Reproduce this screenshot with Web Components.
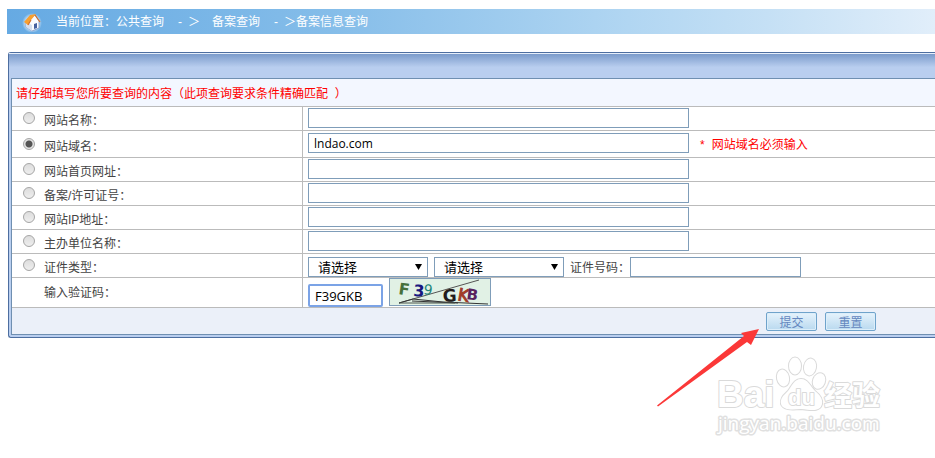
<!DOCTYPE html>
<html lang="zh-CN">
<head>
<meta charset="utf-8">
<title>备案信息查询</title>
<style>
  body {
    background: #fff;
    color: #444;
    font-family: "Liberation Sans", "Noto Sans CJK SC", sans-serif;
    font-size: 12px;
    margin: 9px 0 0 7px;
    overflow-x: hidden;
  }
</style>
</head>
<body>
<location-bar>
  <span>当前位置：公共查询</span>
  <span slot="second">备案查询</span>
  <span slot="third">备案信息查询</span>
</location-bar>
<query-panel></query-panel>
<site-watermark></site-watermark>

<script>
class LocationBar extends HTMLElement {

    constructor() {
        super();
        this.shadow = this.attachShadow({ mode: 'open' });
    }

    connectedCallback() {
        this.render()
    }

    render() {

        this.shadow.innerHTML =
        /*html*/`
      <style>
        :host{
        align-items: center;
        background: linear-gradient(90deg, #66aae3, #85bde9 35%, #b1d6f2 67%, #c5e0f5 82%, #e1eefa);
        color: #fff;
        display: flex;
        height: 25px;
        line-height: 16px;
        padding-left: 15px;
        white-space: nowrap;
        }

        svg{
        height: 20px;
        margin-right: 14px;
        width: 20px;
        }

        .sep{
        display: flex;
        gap: 4px;
        padding: 0 12px 0 14px;
        }

        .dash{
        width: 6px;
        }

        .last{
        padding-right: 0;
        }
      </style>
      <svg viewBox="0 0 20 20" aria-hidden="true">
        <defs><radialGradient id="g"><stop offset=".65" stop-color="#fff" stop-opacity=".6"/><stop offset="1" stop-color="#fff" stop-opacity="0"/></radialGradient></defs>
        <circle cx="10" cy="11" r="10" fill="url(#g)"/>
        <path d="M4 9v6l6 4 7-3V9l-4-6z" fill="#fafbff" stroke="#8296c4" stroke-width=".8"/>
        <path d="M4 10l6 3v6l-6-4z" fill="#d5dff0"/>
        <path d="M2 10L8 3l6-1-5 6-3 5z" fill="#f8a030"/>
        <path d="M13 3l5 7M9 8l-3 5" fill="none" stroke="#d8702a" stroke-width="1.200"/>
        <path d="M12 12l3-1v5l-3 1z" fill="#45609f"/>
      </svg>
      <slot></slot>
      <span class="sep"><span class="dash">-</span><span>＞</span></span>
      <slot name="second"></slot>
      <span class="sep last"><span class="dash">-</span><span>＞</span></span>
      <slot name="third"></slot>
        `
    }
}

class QueryRow extends HTMLElement {

    constructor() {
        super();
        this.shadow = this.attachShadow({ mode: 'open' });
    }

    connectedCallback() {
        this.render()
    }

    render() {

        this.shadow.innerHTML =
        /*html*/`
      <style>
        :host{
        border-bottom: 1px solid #bbb;
        display: grid;
        grid-template-columns: 291px 1fr;
        }

        .name{
        align-items: center;
        border-right: 1px solid #bbb;
        display: flex;
        padding-left: 11px;
        }

        .value{
        align-items: center;
        display: flex;
        gap: 6px;
        padding: 1px 0 2px 5px;
        white-space: nowrap;
        }

        :host([required]) .value{
        padding-bottom: 4px;
        padding-top: 2px;
        }

        :host([select]) .value{
        padding-bottom: 0;
        padding-top: 3px;
        }

        :host([code]) .value{
        align-items: flex-end;
        min-height: 29px;
        padding-bottom: 0;
        padding-top: 0;
        }

        :host([code]) .name{
        padding-left: 32px;
        }
      </style>
      <div class="name"><slot name="name"></slot></div>
      <div class="value"><slot></slot></div>
        `
    }
}

class CaptchaImage extends HTMLElement {

    constructor() {
        super();
        this.shadow = this.attachShadow({ mode: 'open' });
    }

    connectedCallback() {
        this.render()
    }

    render() {

        this.shadow.innerHTML =
        /*html*/`
      <style>
        :host{
        align-self: flex-start;
        background: #e1f1e5;
        border: 1px solid #7f9db9;
        box-sizing: border-box;
        display: block;
        height: 28px;
        width: 102px;
        }

        svg{
        display: block;
        font-family: "DejaVu Sans", sans-serif;
        overflow: visible;
        }
      </style>
      <svg width="100" height="26" viewBox="0 0 100 26">
        <path d="M9 24L89 1" stroke="#555" fill="none"/>
        <path d="M9 24l14-4 30 3 45 2M22 22l46 2" stroke="#333" fill="none"/>
        <path d="M9 24h56" stroke="#4b554d" fill="none"/>
        <text transform="translate(8 15) rotate(8)" font-size="16" font-weight="700" fill="#46703b">F</text>
        <text transform="translate(23 17) rotate(4)" font-size="16" font-weight="700" fill="#17177f">3</text>
        <text transform="translate(33 15) rotate(8)" font-size="14" fill="#268579">9</text>
        <text transform="translate(53 23) rotate(-3)" font-size="17" font-weight="700" fill="#221b1b">G</text>
        <text transform="translate(67 21) rotate(10)" font-size="17" fill="#a13b29" stroke="#a13b29">K</text>
        <text transform="translate(76 20) rotate(8)" font-size="15" font-weight="700" fill="#59235f">B</text>
      </svg>
        `
    }
}

class QueryPanel extends HTMLElement {

    constructor() {
        super();
        this.shadow = this.attachShadow({ mode: 'open' });
    }

    connectedCallback() {
        this.render()
    }

    render() {

        this.shadow.innerHTML =
        /*html*/`
      <style>
        :host{
        display: block;
        margin: 18px 0 0 1px;
        position: relative;
        }

        .frame{
        background: #b9ceef;
        border: 1px solid #4d6ea0;
        border-radius: 3px 0 0 3px;
        border-right: 0;
        }

        .head{
        background: linear-gradient(#7b9bcb, #b9ceef 55%);
        border-top: 1px solid #e6eefa;
        height: 24px;
        }

        form{
        background: #fff;
        border: 1px solid #6f8fb1;
        border-right: 0;
        margin: 0 0 2px 2px;
        }

        .title{
        background: #f3f7ff;
        border-bottom: 1px solid #bbb;
        color: #f00;
        line-height: 24px;
        padding: 3px 0 0 4px;
        }

        label{
        line-height: 16px;
        }

        label[slot="name"]{
        padding-top: 5px;
        }

        label[for="code"]{
        padding: 0;
        }

        input, select{
        background: #fff;
        border: 1px solid #7f9db9;
        border-radius: 0;
        box-sizing: border-box;
        color: #000;
        font: 13px "Open Sans", "Noto Sans CJK SC", sans-serif;
        height: 20px;
        margin: 0;
        outline: 0;
        padding: 0 5px;
        }

        input[type="radio"]{
        appearance: none;
        background: linear-gradient(#ddd, #eee);
        border: 1px solid #a5a5a5;
        border-radius: 50%;
        height: 12px;
        margin: 0 9px 1px 0;
        padding: 0;
        width: 12px;
        }

        input[type="radio"]:checked{
        background: radial-gradient(circle, #555 3px, #e4e4e4 4px);
        }

        .long{
        font-size: 12px;
        width: 381px;
        }

        .number{
        width: 171px;
        }

        .code{
        border: 2px solid #7ba3e6;
        border-radius: 2px;
        height: 23px;
        width: 75px;
        }

        select{
        appearance: none;
        padding: 0 9px;
        width: 100%;
        }

        .drop{
        display: grid;
        width: 120px;
        }

        .wide{
        width: 130px;
        }

        .drop select, .drop svg{
        grid-area: 1 / 1;
        }

        .drop svg{
        align-self: center;
        height: 6px;
        justify-self: end;
        margin-right: 6px;
        pointer-events: none;
        width: 7px;
        }

        .hint{
        color: #f00;
        padding-left: 5px;
        }

        .hint b{
        font-weight: 400;
        padding-right: 7px;
        }

        .foot{
        background: #ebf0f9;
        display: flex;
        gap: 8px;
        justify-content: flex-end;
        padding: 4px 59px 3px 0;
        }

        button{
        background: linear-gradient(#e6f3fc, #b9d9ef);
        border: 1px solid #6fa3cb;
        border-radius: 2px;
        box-shadow: inset 0 0 0 1px #dceefa;
        color: #6487bf;
        font: 12px "Noto Sans CJK SC", sans-serif;
        height: 19px;
        line-height: 16px;
        padding: 0;
        width: 51px;
        }

        .pointer{
        height: 80px;
        position: absolute;
        right: 175px;
        top: 276px;
        width: 104px;
        }
      </style>
      <div class="frame">
        <div class="head"></div>
        <form>
          <div class="title">请仔细填写您所要查询的内容（此项查询要求条件精确匹配&nbsp;&nbsp;）</div>
          <query-row>
            <input slot="name" type="radio" name="kind" id="k1"><label slot="name" for="k1">网站名称：</label>
            <input class="long" type="text" aria-label="网站名称">
          </query-row>
          <query-row required>
            <input slot="name" type="radio" name="kind" id="k2" checked><label slot="name" for="k2">网站域名：</label>
            <input class="long" type="text" aria-label="网站域名" value="lndao.com">
            <span class="hint"><b>*</b>网站域名必须输入</span>
          </query-row>
          <query-row>
            <input slot="name" type="radio" name="kind" id="k3"><label slot="name" for="k3">网站首页网址：</label>
            <input class="long" type="text" aria-label="网站首页网址">
          </query-row>
          <query-row>
            <input slot="name" type="radio" name="kind" id="k4"><label slot="name" for="k4">备案/许可证号：</label>
            <input class="long" type="text" aria-label="备案/许可证号">
          </query-row>
          <query-row>
            <input slot="name" type="radio" name="kind" id="k5"><label slot="name" for="k5">网站IP地址：</label>
            <input class="long" type="text" aria-label="网站IP地址">
          </query-row>
          <query-row>
            <input slot="name" type="radio" name="kind" id="k6"><label slot="name" for="k6">主办单位名称：</label>
            <input class="long" type="text" aria-label="主办单位名称">
          </query-row>
          <query-row select>
            <input slot="name" type="radio" name="kind" id="k7"><label slot="name" for="k7">证件类型：</label>
            <span class="drop"><select aria-label="证件类型"><option>请选择</option></select><svg viewBox="0 0 7 6"><path d="M0 0h7L3.500 6z"/></svg></span>
            <span class="drop wide"><select aria-label="证件类型"><option>请选择</option></select><svg viewBox="0 0 7 6"><path d="M0 0h7L3.500 6z"/></svg></span>
            <span class="cert"><label for="number">证件号码：</label><input class="number" type="text" id="number"></span>
          </query-row>
          <query-row code>
            <label slot="name" for="code">输入验证码：</label>
            <input class="code" type="text" id="code" value="F39GKB">
            <captcha-image></captcha-image>
          </query-row>
          <div class="foot">
            <button type="button">提交</button>
            <button type="reset">重置</button>
          </div>
        </form>
      </div>
      <svg class="pointer" viewBox="0 0 104 80" aria-hidden="true">
        <path d="M103 1L85 5l3 3L1 77.500l1 1L91 14l4 3z" fill="#fb3838"/>
      </svg>
        `
    }
}

class SiteWatermark extends HTMLElement {

    constructor() {
        super();
        this.shadow = this.attachShadow({ mode: 'open' });
    }

    connectedCallback() {
        this.render()
    }

    render() {

        this.shadow.innerHTML =
        /*html*/`
      <style>
        :host{
        display: flex;
        justify-content: flex-end;
        padding: 17px 48px 0 0;
        }

        svg{
        fill: #fff;
        height: 84px;
        overflow: visible;
        paint-order: stroke;
        stroke: #dadada;
        stroke-linejoin: round;
        stroke-width: 2px;
        width: 172px;
        }

        text{
        font-family: "Liberation Sans", "Noto Sans CJK SC", sans-serif;
        font-weight: 700;
        }

        .site{
        font-family: "Open Sans", sans-serif;
        font-size: 19px;
        font-weight: 400;
        stroke: #e0e0e0;
        stroke-width: 3px;
        }
      </style>
      <svg viewBox="0 0 172 84">
        <text x="2" y="52" font-size="37">Bai</text>
        <ellipse cx="68" cy="23" rx="6" ry="8.500" transform="rotate(-12 68 23)"/>
        <ellipse cx="80" cy="11" rx="6" ry="8.500"/>
        <ellipse cx="95" cy="12" rx="6" ry="8.500" transform="rotate(10 95 12)"/>
        <ellipse cx="104" cy="26" rx="6" ry="8" transform="rotate(20 104 26)"/>
        <path d="M86 24c7 0 9 7 14 12 5 4 8 8 7 13-2 8-10 6-21 5-10 1-18 1-20-5-1-6 3-9 7-13 4-5 6-12 13-12z"/>
        <text x="73" y="50" font-size="22">du</text>
        <text x="109" y="51" font-size="28">经验</text>
        <text class="site" x="3" y="75">jingyan.baidu.com</text>
      </svg>
        `
    }
}

customElements.define('location-bar', LocationBar);
customElements.define('query-row', QueryRow);
customElements.define('captcha-image', CaptchaImage);
customElements.define('query-panel', QueryPanel);
customElements.define('site-watermark', SiteWatermark);
</script>
</body>
</html>
